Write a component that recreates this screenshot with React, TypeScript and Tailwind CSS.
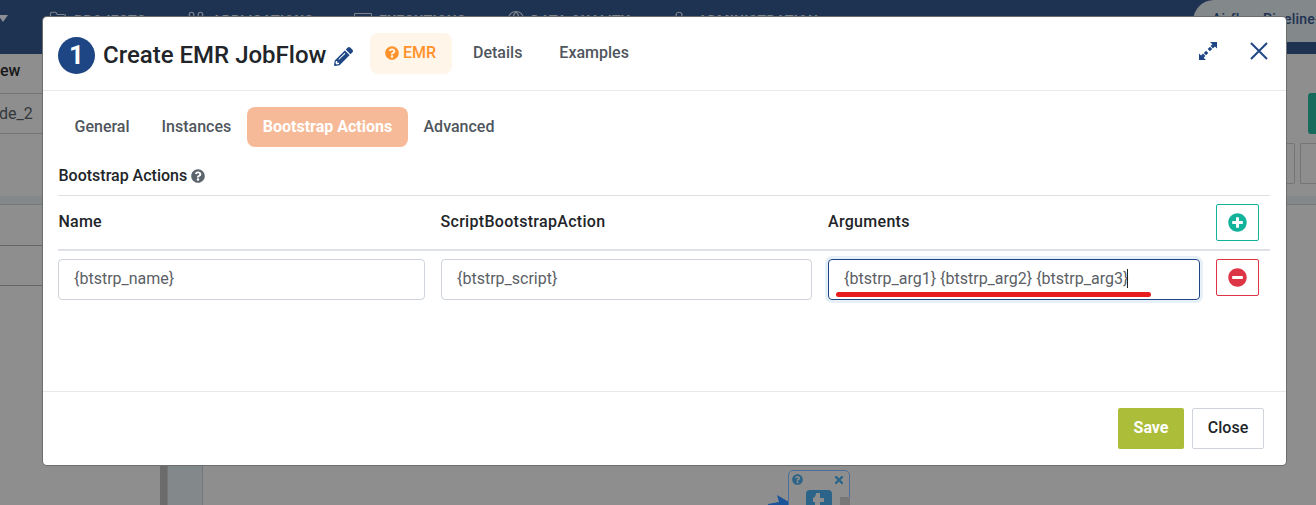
import React from "react";
import {
  FaQuestionCircle,
  FaPlusCircle,
  FaMinusCircle,
  FaPencilAlt,
  FaTimes,
} from "react-icons/fa";
import { FiFolder, FiGlobe, FiUser, FiCommand } from "react-icons/fi";

const navItems = [
  { label: "PROJECTS", icon: <FiFolder size={18} strokeWidth={1.6} />, cls: "w-[138px] gap-[7px]" },
  { label: "APPLICATIONS", icon: <FiCommand size={18} strokeWidth={1.6} />, cls: "w-[166px] gap-[7px]" },
  {
    label: "EXECUTIONS",
    icon: (
      <svg width="19" height="16" viewBox="0 0 19 16" fill="none" stroke="currentColor" className="mt-[2px]">
        <path d="M1.5 1.5H18.5V15H1.5ZM5 5L8 8L5 11" />
      </svg>
    ),
    cls: "w-[154px] gap-[7px]",
  },
  { label: "DATA QUALITY", icon: <FiGlobe size={18} strokeWidth={1.6} />, cls: "w-[163px] gap-[6px]" },
  { label: "ADMINISTRATION", icon: <FiUser size={18} strokeWidth={1.6} />, cls: "w-[200px] gap-[10px]" },
];

function Backdrop() {
  return (
    <div className="flex h-full w-full flex-col bg-[#8e8e8e]">
      <div className="flex h-[54px] shrink-0 bg-[#1e3251]">
        <div className="w-[49px] pt-[15px]">
          <svg width="9" height="8" viewBox="0 0 9 8">
            <path d="M-2 0H8L3 7Z" fill="#8c8f93" />
          </svg>
        </div>
        <div className="flex flex-1 pt-[10px] text-[#7d8388]">
          {navItems.map((n) => (
            <div key={n.label} className={"flex h-[18px] shrink-0 items-center text-[14px] font-bold " + n.cls}>
              {n.icon}
              <span className="whitespace-nowrap pt-[3px] tracking-[0.3px]">{n.label}</span>
            </div>
          ))}
        </div>
        <div className="h-[42px] w-[123px] shrink-0 rounded-bl-[21px] rounded-tl-[21px] bg-[#83888b] pl-[19px] pt-[7px] text-[14px] font-medium tracking-[0.2px] whitespace-nowrap text-[#1e3251]">
          Airflow-Pipeline-
        </div>
      </div>
      <div className="flex h-[142px] shrink-0 justify-between">
        <div className="w-[43px] text-[16px]">
          <div className="h-[40px] border-b border-[#737373] pt-[5px] font-medium text-[#171717]">ew</div>
          <div className="-ml-px h-[40px] border-b border-[#737373] pt-[8px] text-[#33373a]">de_2</div>
        </div>
        <div className="flex w-[30px] flex-col pt-[39px]">
          <div className="ml-[22px] h-[41px] rounded-l-[3px] bg-[#166b5d]" />
          <div className="mt-[9px] flex gap-[5px]">
            <div className="h-[41px] w-[9px] rounded-r-[2px] border border-l-0 border-[#757575]" />
            <div className="h-[41px] w-[16px] rounded-l-[2px] border border-r-0 border-[#757575]" />
          </div>
        </div>
      </div>
      <div className="h-[9px] shrink-0 border-b border-[#747779] bg-[#83888b]" />
      <div className="flex min-h-0 flex-1">
        <div className="w-[160px]">
          <div className="h-[41px] border-b border-[#656565]" />
          <div className="h-[40px] border-b border-[#656565]" />
        </div>
        <div className="w-[7px] bg-[#6b6b6b]" />
        <div className="w-[36px] border-x border-[#747779] bg-[#83888b]" />
        <div className="relative flex-1">
          <svg className="absolute left-[565px] top-[290px]" width="22" height="12" viewBox="0 0 22 12">
            <path d="M9 0L21 7V12H0V9L11 7Z" fill="#1b5498" />
          </svg>
          <div className="absolute left-[585px] top-[265px] h-[62px] w-[62px] rounded-[5px] border border-[#4a6f9d] bg-[#8e8e8e] px-[3px] pt-[3px] text-[#2b6488]">
            <div className="flex justify-between">
              <FaQuestionCircle size={11} />
              <FaTimes size={12} className="mr-px" />
            </div>
            <div className="mx-auto mt-[4px] h-[26px] w-[26px] rounded-[4px] bg-[#2b6488]">
              <svg width="26" height="26" viewBox="0 0 26 26">
                <path d="M10 3H14V8H18V12H14V18H18V22H13Q9 22 9 18V12H7V8Q10 7 10 3Z" fill="#8e8e8e" />
              </svg>
            </div>
          </div>
          <div className="absolute left-[637px] top-[292px] h-[20px] w-[10px] bg-[#777777]" />
        </div>
      </div>
    </div>
  );
}

function Field({ value, cls }: { value: string; cls: string }) {
  return (
    <div className={"flex h-[41px] items-center rounded-[4px] border pb-[2px] pl-[15px] text-[16px] text-[#5b6066] " + cls}>
      {value}
    </div>
  );
}

export default function App() {
  return (
    <div className="relative h-[505px] w-[1316px] overflow-hidden font-[Roboto,sans-serif] leading-[24px]">
      <Backdrop />
      <div className="absolute left-[43px] top-[17px] flex h-[448px] w-[1243px] flex-col rounded-[4px] bg-white text-[16px] font-medium text-[#212529] shadow-[0_0_0_1px_#6d6d6d]">
        <header className="flex h-[74px] shrink-0 border-b border-[#e9e9eb] pl-[15px]">
          <div className="mt-[20px] flex h-[37px] w-[37px] items-center justify-center rounded-full bg-[#1e4684] pb-[2px] text-[26px] font-bold text-white">
            1
          </div>
          <h1 className="ml-[8px] mt-[22px] w-[224px] whitespace-nowrap text-[24px] leading-[32px]">Create EMR JobFlow</h1>
          <FaPencilAlt size={19} className="ml-[7px] mt-[30px] text-[#1e4684]" />
          <div className="ml-[17px] mt-[16px] flex h-[41px] w-[82px] items-center gap-[4px] rounded-[8px] bg-[#fff5e8] pb-[2px] pl-[15px] text-[#ff922b]">
            <FaQuestionCircle size={14} />
            EMR
          </div>
          <span className="ml-[21px] mt-[24px] text-[#50565d]">Details</span>
          <span className="ml-[37px] mt-[24px] text-[#50565d]">Examples</span>
          <div className="ml-auto mr-[18px] mt-[24px] flex gap-[33px]">
            <svg width="18" height="18" viewBox="0 0 18 18" className="mt-[1px]" fill="#1e4684">
              <path d="M11 0H18V6.5L15.9 4.6L14 6.5L11.6 4.1L13.4 2.2Z M11 4.8L13.2 7L10.9 9.2L8.7 7Z" />
              <path d="M7 18H0V11.5L2.1 13.4L4 11.5L6.4 13.9L4.6 15.8Z M7 13.2L4.8 11L7.1 8.8L9.3 11Z" />
            </svg>
            <svg width="18" height="20" viewBox="0 0 18 20" stroke="#1e4684" strokeWidth="2">
              <path d="M1 2L17 18M17 2L1 18" />
            </svg>
          </div>
        </header>
        <main className="h-[300px] shrink-0 px-[15px] pt-[16px]">
          <nav className="flex h-[40px] text-[#50565d]">
            <span className="w-[87px] pl-[16.5px] pt-[8px]">General</span>
            <span className="w-[102px] pl-[16.5px] pt-[8px]">Instances</span>
            <span className="w-[161px] rounded-[8px] bg-[#f6ba98] pt-[8px] text-center font-bold text-white">Bootstrap Actions</span>
            <span className="pl-[15.5px] pt-[8px]">Advanced</span>
          </nav>
          <div className="flex h-[49px] w-[1212px] items-center gap-[4px] border-b border-[#dee2e6] pl-[0.5px] pt-[9px]">
            Bootstrap Actions
            <FaQuestionCircle size={14} className="text-[#5b636d]" />
          </div>
          <div className="flex h-[55px] w-[1212px] border-b-2 border-[#dee2e6]">
            <span className="w-[382px] pl-[0.5px] pt-[14px] tracking-[0.2px]">Name</span>
            <span className="w-[388px] pl-[0.5px] pt-[14px] tracking-[0.3px]">ScriptBootstrapAction</span>
            <span className="w-[388px] pt-[14px] tracking-[0.3px]">Arguments</span>
            <button className="mt-[8px] flex h-[37px] w-[43px] items-center justify-center rounded-[2px] border border-[#12b39a] text-[#12b39a]">
              <FaPlusCircle size={19} />
            </button>
          </div>
          <div className="flex pt-[8px] font-normal">
            <Field value="{btstrp_name}" cls="w-[367px] border-[#ced4da]" />
            <Field value="{btstrp_script}" cls="ml-[16px] w-[371px] border-[#ced4da]" />
            <div className="relative ml-[16px]">
              <Field value="{btstrp_arg1} {btstrp_arg2} {btstrp_arg3}" cls="w-[372px] border-[#1e4684] shadow-[0_0_0_3px_#e6f0f6]" />
              <div className="absolute left-[299px] top-[10px] h-[19px] w-px bg-[#222]" />
              <div className="absolute left-[7.5px] top-[32.5px] h-[5px] w-[315px] rounded-full bg-[#e81c1c]" />
            </div>
            <button className="ml-[16px] flex h-[37px] w-[43px] items-center justify-center rounded-[2px] border border-[#dc3545] text-[#dc3545]">
              <FaMinusCircle size={19} />
            </button>
          </div>
        </main>
        <footer className="flex flex-1 justify-end gap-[8px] border-t border-[#e9e9eb] pr-[22px] pt-[16px]">
          <button className="h-[41px] w-[66px] rounded-[2px] bg-[#abbd39] pb-[2px] font-bold text-white">Save</button>
          <button className="h-[41px] w-[72px] rounded-[2px] border border-[#ced4da] pb-[2px]">Close</button>
        </footer>
      </div>
    </div>
  );
}
